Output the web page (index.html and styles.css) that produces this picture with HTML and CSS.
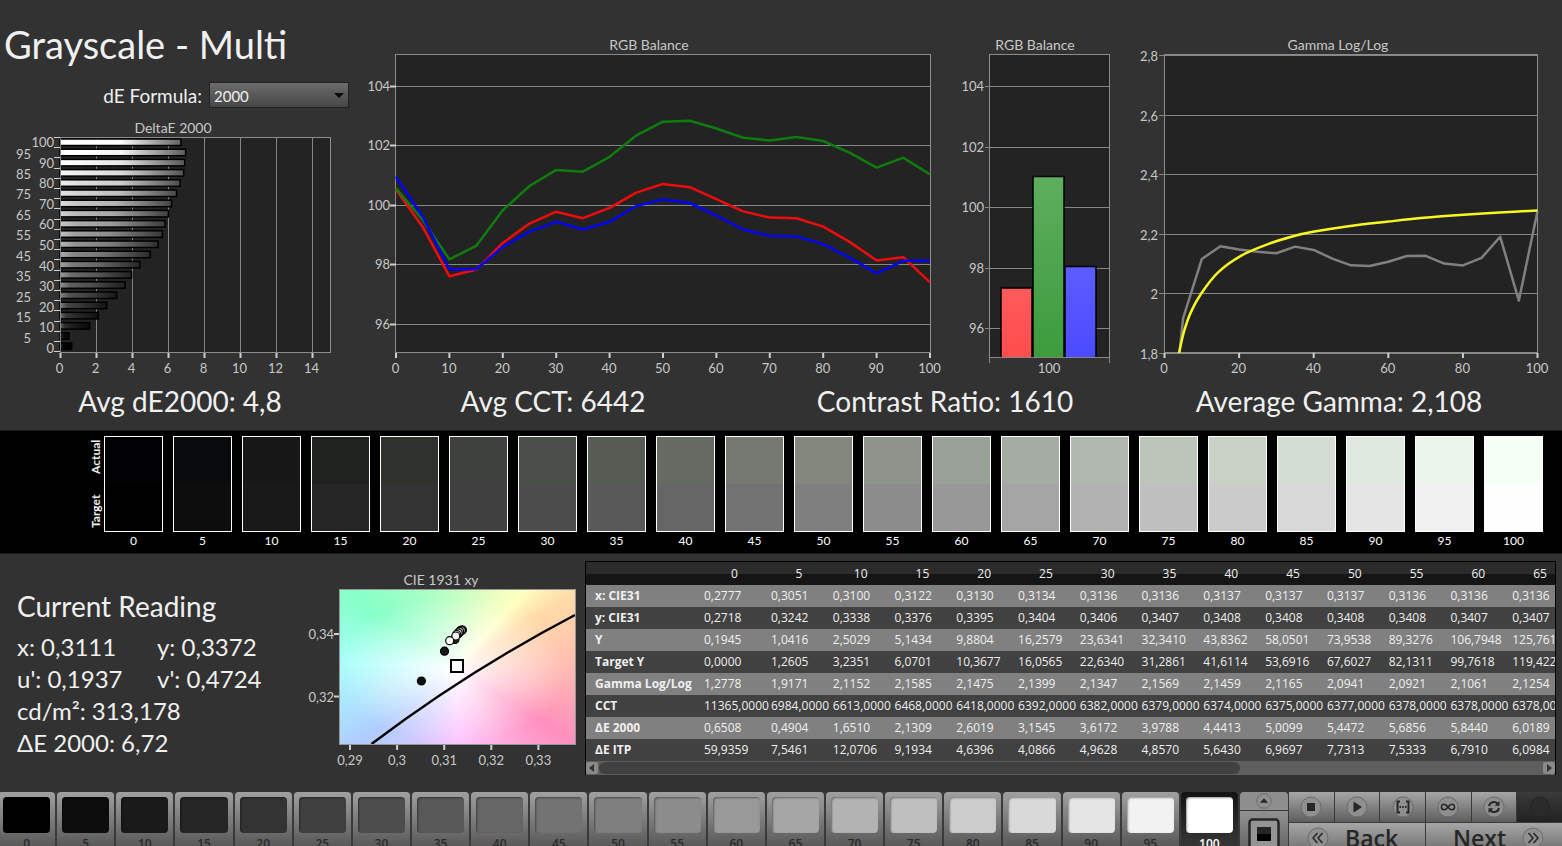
FILE: index.html
```html
<!DOCTYPE html>
<html lang="en">
<head>
<meta charset="utf-8">
<title>Grayscale - Multi</title>
<link rel="stylesheet" href="styles.css">
</head>
<body>
<main class="workspace">
  <section class="charts">
    <div class="chart-column">
      <h1 class="title">Grayscale - Multi</h1>
      <div class="formula">
        <label for="formula">dE Formula:</label>
        <select id="formula"><option>2000</option><option>1976</option><option>ITP</option></select>
      </div>
      <svg class="chart" id="delta-chart" viewBox="0 118 355 266" role="img" aria-label="DeltaE 2000"></svg>
    </div>
    <svg class="chart" id="balance-chart" viewBox="355 36 590 348" role="img" aria-label="RGB Balance"></svg>
    <svg class="chart" id="bar-chart" viewBox="945 36 180 348" role="img" aria-label="RGB Balance at 100"></svg>
    <svg class="chart" id="gamma-chart" viewBox="1125 36 437 348" role="img" aria-label="Gamma Log/Log"></svg>
  </section>

  <section class="stats">
    <p>Avg dE2000: 4,8</p>
    <p>Avg CCT: 6442</p>
    <p>Contrast Ratio: 1610</p>
    <p>Average Gamma: 2,108</p>
  </section>

  <section class="strip">
    <div class="strip-side"><span>Actual</span><span>Target</span></div>
    <div class="strip-cells" id="strip"></div>
  </section>

  <section class="details">
    <div class="reading">
      <h2>Current Reading</h2>
      <div class="pair"><span>x: 0,3111</span><span>y: 0,3372</span></div>
      <div class="pair"><span>u': 0,1937</span><span>v': 0,4724</span></div>
      <div>cd/m²: 313,178</div>
      <div>ΔE 2000: 6,72</div>
    </div>
    <svg class="chart" id="cie-chart" viewBox="300 572 280 203" role="img" aria-label="CIE 1931 xy"></svg>
    <div class="table-panel">
      <table class="data">
        <colgroup><col class="col-name"><col class="col-first"><col span="13"></colgroup>
        <thead><tr id="data-head"><th></th></tr></thead>
        <tbody id="data-body"></tbody>
      </table>
      <div class="scroll">
        <button type="button" aria-label="Scroll left"><svg viewBox="0 0 12 12"><path d="M8 2v8L3 6z"/></svg></button>
        <div class="scroll-track"><div class="scroll-thumb"></div></div>
        <button type="button" aria-label="Scroll right"><svg viewBox="0 0 12 12"><path d="M4 2v8l5-4z"/></svg></button>
      </div>
    </div>
  </section>

  <footer class="toolbar">
    <div class="patches" id="patches"></div>
    <div class="pattern">
      <button type="button" class="pattern-up" aria-label="Expand"><svg viewBox="0 0 20 20"><circle class="knob" cx="10" cy="10" r="8"/><path class="ink" d="M5.500 12h9L10 7z"/></svg></button>
      <button type="button" class="pattern-window" aria-label="Pattern window"><svg viewBox="0 0 32 32"><rect x="1.500" y="1.500" width="29" height="29" rx="3" fill="#949494" stroke="#262626" stroke-width="2.500"/><path fill="#262626" d="M9 9h14v7H9z"/><path fill="#000" d="M9 16h14v7H9z"/></svg></button>
    </div>
    <div class="transport">
      <div class="transport-row">
        <button type="button" aria-label="Stop"><svg viewBox="0 0 22 22"><circle class="knob" cx="11" cy="11" r="10"/><path class="ink" d="M7 7h8v8H7z"/></svg></button>
        <button type="button" aria-label="Play"><svg viewBox="0 0 22 22"><circle class="knob" cx="11" cy="11" r="10"/><path class="ink" d="M7.500 5.500v11l8.500-5.500z"/></svg></button>
        <button type="button" aria-label="Measure range"><svg viewBox="0 0 22 22"><circle class="knob" cx="11" cy="11" r="10"/><path class="line" d="M8 5.500H5.500v11H8M14 5.500h2.500v11H14"/><path class="ink" d="M7.500 10h1.500v2H7.500zM10.200 10h1.600v2h-1.600zM13 10h1.500v2H13z"/></svg></button>
        <button type="button" aria-label="Continuous"><svg viewBox="0 0 22 22"><circle class="knob" cx="11" cy="11" r="10"/><path class="line thin" d="M11 11C9.500 9 8.500 8.200 7.200 8.200a2.800 2.800 0 0 0 0 5.600C8.500 13.800 9.500 13 11 11s2.500-2.800 3.800-2.800a2.800 2.800 0 0 1 0 5.600C13.500 13.800 12.500 13 11 11z"/></svg></button>
        <button type="button" aria-label="Refresh"><svg viewBox="0 0 22 22"><circle class="knob" cx="11" cy="11" r="10"/><path class="line" d="M6 10a5 5 0 0 1 8.500-2.500M16 12a5 5 0 0 1-8.500 2.500"/><path class="ink" d="M16.500 5v4.800h-4.800zM5.500 17v-4.800h4.800z"/></svg></button>
        <button type="button" class="off" aria-label="Record"><svg viewBox="0 0 22 22"><circle cx="11" cy="11" r="10" fill="#2b2b2b" stroke="#252525"/></svg></button>
      </div>
      <div class="transport-row steps">
        <button type="button"><svg viewBox="0 0 22 22"><circle class="knob" cx="11" cy="11" r="10"/><path class="line thin" d="M10.500 6L6 11l4.500 5M15.500 6L11 11l4.500 5"/></svg><span>Back</span></button>
        <button type="button" class="next"><span>Next</span><svg viewBox="0 0 22 22"><circle class="knob" cx="11" cy="11" r="10"/><path class="line thin" d="M6.500 6l4.500 5-4.500 5M11.500 6l4.500 5-4.500 5"/></svg></button>
      </div>
    </div>
  </footer>
</main>
<script src="app.js"></script>
</body>
</html>
```
FILE: styles.css
```css
* { box-sizing: border-box; }

body {
  margin: 0;
  overflow: hidden;
  background: #323232;
  color: #f0f0f0;
  font-family: Lato, "Open Sans", sans-serif;
}

button { font: inherit; border: 0; padding: 0; margin: 0; color: #262626; }
h1, h2, p { margin: 0; font-weight: 400; }

.workspace { height: 100vh; overflow: hidden; }

/* Charts */
.charts {
  display: grid;
  grid-template-columns: 355fr 590fr 180fr 437fr;
  align-items: end;
}
.chart { display: block; width: 100%; }
.chart text { fill: #c8c8c8; font-size: 13px; }
.chart .chart-title { font-size: 14px; }
.title { padding: 22px 0 0 4px; font-size: 38px; line-height: 45px; white-space: nowrap; }
.formula {
  position: relative;
  display: flex;
  justify-content: flex-end;
  align-items: center;
  gap: 7px;
  padding: 15px 6px 10px 0;
  font-size: 19px;
}
.formula select {
  appearance: none;
  width: 140px;
  height: 26px;
  padding: 2px 4px 0;
  border: 1px solid #222;
  border-radius: 0;
  color: #f0f0f0;
  font: 15px Lato, sans-serif;
  background: linear-gradient(#6c6c6c, #464646);
}
.formula::after {
  content: "";
  position: absolute;
  right: 11px;
  top: 26px;
  border: 5px solid transparent;
  border-top-color: #0a0a0a;
  border-bottom: 0;
  pointer-events: none;
}

.plot { fill: #232323; stroke: #8c8c8c; }
.grid { stroke: #868686; fill: none; }
.tick { stroke: #cfcfcf; fill: none; stroke-width: 2; }
.series { fill: none; stroke-width: 2.5; stroke-linejoin: round; }
.bar { stroke: #000; stroke-width: 1.5; }

/* Averages */
.stats {
  display: grid;
  grid-template-columns: 360fr 386fr 398fr 390fr 28fr;
  padding-bottom: 12px;
  text-align: center;
  font-size: 28px;
  line-height: 34px;
}

/* Actual / target strip */
.strip {
  display: flex;
  padding: 5px 19px 4px 88px;
  background: #000;
  border-top: 1px solid #1c1c1c;
  border-bottom: 1px solid #1c1c1c;
}
.strip-side {
  display: flex;
  flex-direction: column;
  gap: 12px;
  width: 16px;
  font-size: 12px;
  font-weight: 700;
  line-height: 16px;
}
.strip-side span {
  height: 42px;
  writing-mode: vertical-rl;
  transform: rotate(180deg);
  text-align: center;
}
.strip-cells { display: grid; grid-template-columns: repeat(21, 1fr); gap: 10px; flex: 1; }
.cell { text-align: center; font-size: 12px; line-height: 17px; color: #fff; }
.cell-box { height: 96px; border: 1px solid #fff; }

/* Reading, CIE chart, table */
.details {
  display: grid;
  grid-template-columns: 300fr 280fr 976fr;
  align-items: start;
  padding: 7px 6px 17px 0;
}
.reading { padding: 26px 0 0 17px; font-size: 24px; line-height: 32px; }
.reading h2 { font-size: 28px; line-height: 38px; margin-bottom: 6px; }
.pair { display: grid; grid-template-columns: 140px 1fr; }
#cie-chart { margin-top: 11px; }
.cie-fill {
  height: 100%;
  background: radial-gradient(ellipse at 48% 52%, #fff, rgba(255, 255, 255, 0) 66%),
    conic-gradient(from 0deg at 50% 50%, #c4ffc4 0deg, #ffffc0 42deg, #ffdca8 57deg, #ffbcb0 90deg, #ff8fbe 123deg, #ffb0e0 150deg, #ffc4ff 178deg, #b0ccff 232deg, #a8fffa 272deg, #86ffc8 303deg, #c4ffc4 360deg);
}
.table-panel {
  margin-left: 5px;
  overflow: hidden;
  border: 1px solid #000;
  border-bottom: 0;
  background: #5e5e5e;
}
.data {
  width: calc(100% + 13px);
  table-layout: fixed;
  border-collapse: collapse;
  font: 12px "Open Sans", sans-serif;
}
.col-name { width: 112px; }
.col-first { width: 67px; }
.data th, .data td { height: 22px; padding: 0 0 0 6px; text-align: left; white-space: nowrap; line-height: 20px; }
.data thead th {
  height: 23px;
  text-align: center;
  font-weight: 400;
}
.data thead tr { background: linear-gradient(#2b2b2b 50%, #151515 50%); }
.data tbody th { padding-left: 9px; font-weight: 700; }
.data tbody tr { background: #414141; }
.data tbody tr:nth-child(odd) { background: #808080; }
.scroll { display: flex; gap: 1px; height: 14px; padding: 1px 0; background: #5e5e5e; }
.scroll button { width: 12px; border-radius: 2px; background: #8a8a8a; }
.scroll svg { display: block; width: 12px; fill: #333; }
.scroll-track { flex: 1; }
.scroll-thumb { width: 68%; height: 12px; border-radius: 6px; background: #414141; }

/* Toolbar */
.toolbar { display: grid; grid-template-columns: 1238fr 50fr 274fr; background: #3a3a3a; }
.patches { display: grid; grid-template-columns: repeat(21, 1fr); gap: 2px; margin-left: -2px; }
.patch {
  height: 64px;
  padding: 5px;
  border-radius: 4px 4px 0 0;
  background: linear-gradient(#a0a0a0, #4c4c4c);
  font: 600 12px/18px "Open Sans", sans-serif;
  color: #2a2a2a;
}
.patch-color { display: block; height: 36px; border-radius: 4px; margin-bottom: 2px; box-shadow: inset 1px 1px 2px rgba(0, 0, 0, 0.4); }
.patch.current { background: linear-gradient(#141414, #3c3c3c); color: #fff; }
.pattern { display: flex; flex-direction: column; gap: 1px; padding-left: 2px; }
.pattern button { display: grid; place-items: center; background: linear-gradient(#929292, #5c5c5c); }
.pattern-up { height: 18px; border-radius: 4px 4px 0 0; }
.pattern .pattern-up { background: #8e8e8e; }
.pattern-up svg { width: 18px; }
.pattern-window { height: 45px; }
.pattern-window svg { width: 32px; }
.transport { display: grid; gap: 1px; padding-left: 1px; align-content: start; }
.transport-row { display: grid; grid-template-columns: repeat(6, 1fr); gap: 1px; }
.transport-row button { display: flex; align-items: center; justify-content: center; height: 30px; background: linear-gradient(#a6a6a6, #5e5e5e); }
.transport-row svg { width: 22px; }
.transport-row .off { background: linear-gradient(#3a3a3a, #222); }
.transport-row.steps { grid-template-columns: repeat(2, 1fr); }
.transport-row.steps button {
  gap: 16px;
  height: 38px;
  padding: 0 18px;
  justify-content: flex-start;
  align-items: flex-start;
  font: 600 23px/30px "Open Sans", sans-serif;
}
.transport-row.steps .next { justify-content: flex-end; }
.steps svg { margin-top: 4px; }
.knob { fill: #8f8f8f; stroke: #6c6c6c; }
.ink { fill: #262626; }
.line { fill: none; stroke: #262626; stroke-width: 2; }
.line.thin { stroke-width: 1.5; }
```
FILE: app.js
```js
const levels = Array.from({ length: 21 }, (_, i) => i * 5);
const byId = (id) => document.getElementById(id);
const gray = (v) => { const c = Math.max(0, Math.min(255, Math.round(v))); return `rgb(${c},${c},${c})`; };
const text = (x, y, s, anchor = "middle") => `<text x="${x}" y="${y}" text-anchor="${anchor}">${s}</text>`;
const title = (x, y, s) => `<text class="chart-title" x="${x}" y="${y}" text-anchor="middle">${s}</text>`;
const line = (cls, x1, y1, x2, y2) => `<path class="${cls}" d="M${x1} ${y1}L${x2} ${y2}"/>`;
const points = (data, fx, fy) => data.map((v, i) => `${fx(levels[i]).toFixed(1)},${fy(v).toFixed(1)}`).join(" ");

function deltaChart() {
  const values = [0.65, 0.49, 1.65, 2.13, 2.6, 3.15, 3.62, 3.98, 4.44, 5.01, 5.45, 5.69, 5.84, 6.02, 6.2, 6.48, 6.67, 6.87, 6.93, 6.98, 6.72];
  let out = title(173, 133, "DeltaE 2000") + '<rect class="plot" x="60.5" y="137.5" width="270" height="215"/>';
  for (let v = 0; v <= 14; v += 2) {
    const x = Math.round(60 + 18 * v) + 0.5;
    out += line("grid", x, 138, x, 352) + line("tick", x, 353, x, 358) + text(x - 1, 373, v);
  }
  levels.forEach((level, i) => {
    const y = 139 + (20 - i) * 10.2;
    const base = level * 2.55;
    out += `<linearGradient id="g${i}"><stop offset="0" stop-color="${gray(base + 70 * (1 - level / 100) + 20)}"/><stop offset=".15" stop-color="${gray(base + 20)}"/><stop offset=".5" stop-color="${gray(base)}"/><stop offset="1" stop-color="${gray(base * 0.38)}"/></linearGradient>`;
    out += `<rect class="bar" x="60" y="${y.toFixed(1)}" width="${(values[i] * 18).toFixed(1)}" height="6.5" fill="url(#g${i})"/>`;
    out += level % 10 ? text(31, (158.5 + (19 - i) * 10.22).toFixed(1), level, "end") : text(54, (147 + (20 - i) * 10.3).toFixed(1), level, "end");
  });
  for (let i = 0; i <= 21; i++) {
    const y = Math.round(137 + i * 10.2) + 0.5;
    out += `<path class="tick" style="stroke-width:1" d="M54 ${y}H60"/>`;
  }
  out += line("grid", 60.5, 138, 60.5, 352);
  byId("delta-chart").innerHTML = out;
}

function balanceChart() {
  const green = [100.55, 99.49, 98.17, 98.62, 99.82, 100.63, 101.17, 101.11, 101.61, 102.33, 102.79, 102.82, 102.56, 102.25, 102.16, 102.28, 102.14, 101.74, 101.25, 101.58, 101.02];
  const red = [100.51, 99.26, 97.6, 97.82, 98.72, 99.37, 99.77, 99.55, 99.9, 100.41, 100.7, 100.59, 100.19, 99.78, 99.57, 99.55, 99.27, 98.75, 98.13, 98.24, 97.4];
  const blue = [100.94, 99.6, 97.84, 97.84, 98.59, 99.1, 99.43, 99.17, 99.43, 99.96, 100.18, 100.06, 99.64, 99.17, 98.96, 98.94, 98.68, 98.22, 97.7, 98.12, 98.12];
  const fx = (v) => 396 + 5.34 * v;
  const fy = (v) => 204.8 - 29.8 * (v - 100);
  let out = title(649, 50, "RGB Balance") + '<rect class="plot" x="395.5" y="54.5" width="535" height="298"/>';
  for (let v = 96; v <= 104; v += 2) {
    const y = Math.round(fy(v)) + 0.5;
    out += line("grid", 396, y, 930, y) + line("tick", 390, y, 396, y) + text(390, y + 4, v, "end");
  }
  for (let v = 0; v <= 100; v += 10) out += line("tick", fx(v), 353, fx(v), 358) + text(fx(v) - 0.5, 373, v);
  out += `<polyline class="series" stroke="#f00c0c" points="${points(red, fx, fy)}"/>`;
  out += `<polyline class="series" stroke="#0e7c0e" points="${points(green, fx, fy)}"/>`;
  out += `<polyline class="series" stroke="#0404f0" points="${points(blue, fx, fy)}"/>`;
  byId("balance-chart").innerHTML = out;
}

function barChart() {
  const fy = (v) => 207 - 30.25 * (v - 100);
  let out = title(1035, 50, "RGB Balance") + '<rect class="plot" x="989.5" y="54.5" width="120" height="303"/>';
  for (let v = 96; v <= 104; v += 2) {
    const y = Math.round(fy(v)) + 0.5;
    out += line("grid", 985, y, 1109, y) + text(984, y + 4, v, "end");
  }
  const bars = [["r", 1001, 288, "#ff5a5a", "#ff4d4d"], ["g", 1033, 176.5, "#5eae5e", "#3d9b3d"], ["b", 1065, 266.5, "#5c5cff", "#4b4bff"]];
  for (const [id, x, y, top, bottom] of bars) {
    out += `<linearGradient id="bar-${id}" x2="0" y2="1"><stop stop-color="${top}"/><stop offset="1" stop-color="${bottom}"/></linearGradient>`;
    out += `<path class="bar" d="M${x} 358V${y}H${x + 31}V358" fill="url(#bar-${id})"/>`;
  }
  out += '<path class="grid" d="M989.5 363V357.500H1109.500V363"/>' + text(1049, 373, 100);
  byId("bar-chart").innerHTML = out;
}

function smooth(pts) {
  let d = `M${pts[0]}`;
  for (let i = 0; i < pts.length - 1; i++) {
    const a = pts[i - 1] || pts[i], b = pts[i], c = pts[i + 1], e = pts[i + 2] || c;
    d += `C${b[0] + (c[0] - a[0]) / 6} ${b[1] + (c[1] - a[1]) / 6} ${c[0] - (e[0] - b[0]) / 6} ${c[1] - (e[1] - b[1]) / 6} ${c}`;
  }
  return d;
}

function gammaChart() {
  const gamma = [[4, 1.8], [5, 1.917], [10, 2.1152], [15, 2.1585], [20, 2.1475], [25, 2.1399], [30, 2.1347], [35, 2.1569], [40, 2.1459], [45, 2.1165], [50, 2.0941], [55, 2.0921], [60, 2.1061], [65, 2.1254], [70, 2.126], [75, 2.1], [80, 2.094], [85, 2.119], [90, 2.19], [95, 1.976], [100, 2.276]];
  const target = [[3.9, 1.8], [5.2, 1.871], [7.1, 1.938], [9.8, 1.999], [14.3, 2.07], [20.6, 2.127], [28.1, 2.167], [34.5, 2.192], [39.8, 2.2066], [49.3, 2.2256], [60, 2.241], [69.6, 2.2536], [80.2, 2.2637], [89.8, 2.2715], [100, 2.278]];
  const fx = (v) => 1164.5 + 3.73 * v;
  const fy = (v) => 55 + (2.8 - v) * 298;
  let out = title(1338, 50, "Gamma Log/Log") + '<rect class="plot" x="1164.5" y="54.5" width="373" height="298"/>';
  ["2,8", "2,6", "2,4", "2,2", "2", "1,8"].forEach((label, i) => {
    const y = Math.round(55 + i * 59.6) + 0.5;
    out += line("grid", 1159, y, 1537, y) + text(1158, y + 5, label, "end");
  });
  for (let v = 0; v <= 100; v += 20) out += line("tick", fx(v), 353, fx(v), 358) + text(fx(v) - 0.5, 373, v);
  out += `<polyline class="series" stroke="#808080" points="${gamma.map(([x, y]) => [fx(x), fy(y)]).join(" ")}"/>`;
  out += `<path class="series" stroke="#f8f820" d="${smooth(target.map(([x, y]) => [fx(x), fy(y)]))}"/>`;
  byId("gamma-chart").innerHTML = out;
}

function cieChart() {
  const fx = (x) => 350.3 + 4710 * (x - 0.29);
  const fy = (y) => 632 - 3100 * (y - 0.34);
  const dots = [[0.3051, 0.3242, 5], [0.31, 0.3338, 10], [0.3122, 0.3376, 15], [0.313, 0.3395, 20], [0.3134, 0.3404, 25], [0.3136, 0.3406, 30], [0.3138, 0.3406, 20], [0.3136, 0.3405, 60], [0.3132, 0.3402, 80], [0.3129, 0.3397, 85], [0.3126, 0.3392, 90], [0.3124, 0.3387, 95], [0.3111, 0.3372, 100]];
  let out = title(441, 585, "CIE 1931 xy");
  out += '<foreignObject x="340" y="590" width="235" height="154"><div class="cie-fill"></div></foreignObject>';
  out += '<path d="M371.500 744Q468 671 575 615" fill="none" stroke="#000" stroke-width="2.500"/>';
  out += '<rect x="339.5" y="589.500" width="236" height="155" fill="none" stroke="#969696"/>';
  out += line("tick", 334, 634, 339, 634) + text(334, 638.5, "0,34", "end");
  out += line("tick", 334, 696.5, 339, 696.5) + text(334, 701.5, "0,32", "end");
  ["0,29", "0,3", "0,31", "0,32", "0,33"].forEach((label, i) => {
    const x = 350 + 47.1 * i;
    out += line("tick", x, 745, x, 750) + text(x, 765, label);
  });
  for (const [x, y, level] of dots) out += `<circle cx="${fx(x).toFixed(1)}" cy="${fy(y).toFixed(1)}" r="4" stroke="#000" stroke-width="1.200" fill="${gray(level * 2.55)}"/>`;
  out += '<rect x="451" y="660" width="12" height="12" fill="#fff" stroke="#000" stroke-width="2"/>';
  byId("cie-chart").innerHTML = out;
}

function strip() {
  const actual = ["#020204", "#090b0d", "#171717", "#20221f", "#2f312d", "#3e413d", "#4a4f4a", "#565b54", "#656a63", "#757972", "#83877e", "#8e938c", "#9aa198", "#a5aca3", "#b0b8af", "#bdc5bb", "#cad1c5", "#d4ddd4", "#dfe8de", "#eaf4ea", "#f4fff6"];
  byId("strip").innerHTML = levels.map((level, i) => {
    const target = gray(level * 2.54);
    return `<div class="cell"><div class="cell-box" style="background:linear-gradient(${actual[i]} 50%,${target} 50%)"></div>${level}</div>`;
  }).join("");
}

function table() {
  const rows = [
    ["x: CIE31", "0,2777 0,3051 0,3100 0,3122 0,3130 0,3134 0,3136 0,3136 0,3137 0,3137 0,3137 0,3136 0,3136 0,3136"],
    ["y: CIE31", "0,2718 0,3242 0,3338 0,3376 0,3395 0,3404 0,3406 0,3407 0,3408 0,3408 0,3408 0,3408 0,3407 0,3407"],
    ["Y", "0,1945 1,0416 2,5029 5,1434 9,8804 16,2579 23,6341 32,3410 43,8362 58,0501 73,9538 89,3276 106,7948 125,7614"],
    ["Target Y", "0,0000 1,2605 3,2351 6,0701 10,3677 16,0565 22,6340 31,2861 41,6114 53,6916 67,6027 82,1311 99,7618 119,4229"],
    ["Gamma Log/Log", "1,2778 1,9171 2,1152 2,1585 2,1475 2,1399 2,1347 2,1569 2,1459 2,1165 2,0941 2,0921 2,1061 2,1254"],
    ["CCT", "11365,0000 6984,0000 6613,0000 6468,0000 6418,0000 6392,0000 6382,0000 6379,0000 6374,0000 6375,0000 6377,0000 6378,0000 6378,0000 6378,0000"],
    ["ΔE 2000", "0,6508 0,4904 1,6510 2,1309 2,6019 3,1545 3,6172 3,9788 4,4413 5,0099 5,4472 5,6856 5,8440 6,0189"],
    ["ΔE ITP", "59,9359 7,5461 12,0706 9,1934 4,6396 4,0866 4,9628 4,8570 5,6430 6,9697 7,7313 7,5333 6,7910 6,0984"],
  ];
  byId("data-head").innerHTML = "<th></th>" + levels.slice(0, 14).map((l) => `<th scope="col">${l}</th>`).join("");
  byId("data-body").innerHTML = rows.map(([name, values]) => `<tr><th scope="row">${name}</th>${values.split(" ").map((v) => `<td>${v}</td>`).join("")}</tr>`).join("");
}

function patches() {
  byId("patches").innerHTML = levels.map((level) => `<button type="button" class="patch${level === 100 ? " current" : ""}"><span class="patch-color" style="background:${gray(level * 2.55)}"></span>${level}</button>`).join("");
}

deltaChart();
balanceChart();
barChart();
gammaChart();
cieChart();
strip();
table();
patches();
```
